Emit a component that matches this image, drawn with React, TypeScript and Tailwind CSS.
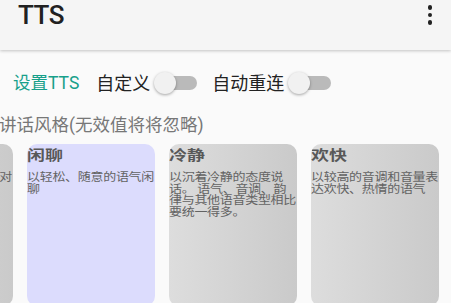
const font = { fontFamily: '"Roboto", "Noto Sans CJK SC", sans-serif' };

type Style = { title: string; desc: string; selected?: boolean };

const styles: Style[] = [
  { title: "助理", desc: "以热情而轻松的语气对数字助理讲话" },
  { title: "闲聊", desc: "以轻松、随意的语气闲聊", selected: true },
  { title: "冷静", desc: "以沉着冷静的态度说话。 语气、音调、韵律与其他语音类型相比要统一得多。" },
  { title: "欢快", desc: "以较高的音调和音量表达欢快、热情的语气" },
  { title: "客服", desc: "以友好热情的语气为客户提供支持" },
];

function Switch() {
  return (
    <div className="relative w-[43px] h-[24px] shrink-0">
      <div className="absolute left-[8px] top-[5px] w-[35px] h-[14px] rounded-full bg-[#bababa]" />
      <div className="absolute left-0 top-[1px] w-[22px] h-[22px] rounded-full bg-[#f1f1f1] shadow-[0_1px_3px_rgba(0,0,0,0.35)]" />
    </div>
  );
}

function StyleCard({ item }: { item: Style }) {
  return (
    <div
      className={
        item.selected
          ? "w-[128px] h-[162px] shrink-0 rounded-[10px] bg-[#dcdcfd] overflow-hidden pt-[3px]"
          : "w-[128px] h-[162px] shrink-0 rounded-[10px] bg-gradient-to-r from-[#dddddd] to-[#cacaca] overflow-hidden pt-[3px]"
      }
    >
      {/* text in the cards is drawn squashed vertically */}
      <div className="origin-top scale-y-75 text-[18px] leading-[22px] font-bold text-[#585858]">{item.title}</div>
      <p className="mt-[2px] origin-top scale-y-90 text-[13px] leading-[13px] tracking-[-0.3px] text-[#636363]">
        {item.desc}
      </p>
    </div>
  );
}

export default function App() {
  return (
    <div className="w-[451px] h-[303px] overflow-hidden bg-[#fafafa]" style={font}>
      <header className="h-[50px] bg-[#f5f5f5] shadow-[0_1px_3px_rgba(0,0,0,0.22)] flex justify-between pl-[18px] pr-[19px]">
        <h1 className="text-[26px] leading-[30px] font-medium text-[#212121] tracking-[-0.5px]">TTS</h1>
        <div className="flex flex-col gap-[3px] pt-[5px]">
          <span className="w-[4.5px] h-[4.5px] rounded-full bg-[#222]" />
          <span className="w-[4.5px] h-[4.5px] rounded-full bg-[#222]" />
          <span className="w-[4.5px] h-[4.5px] rounded-full bg-[#222]" />
        </div>
      </header>

      <div className="mt-[19px] h-[28px] flex items-center pl-[13px] text-[18px] text-[#222]">
        <span className="text-[#17a08a] text-[17.5px]">设置TTS</span>
        <span className="ml-[17px]">自定义</span>
        <div className="ml-[4px]">
          <Switch />
        </div>
        <span className="ml-[15px]">自动重连</span>
        <div className="ml-[4px]">
          <Switch />
        </div>
      </div>

      <div className="mt-[17px] text-[17.5px] leading-[22px] text-[#777] -ml-[1px]">讲话风格(无效值将将忽略)</div>

      <div className="mt-[8px] flex gap-[14px] -ml-[115px]">
        {styles.map((s) => (
          <StyleCard key={s.title} item={s} />
        ))}
      </div>
    </div>
  );
}
